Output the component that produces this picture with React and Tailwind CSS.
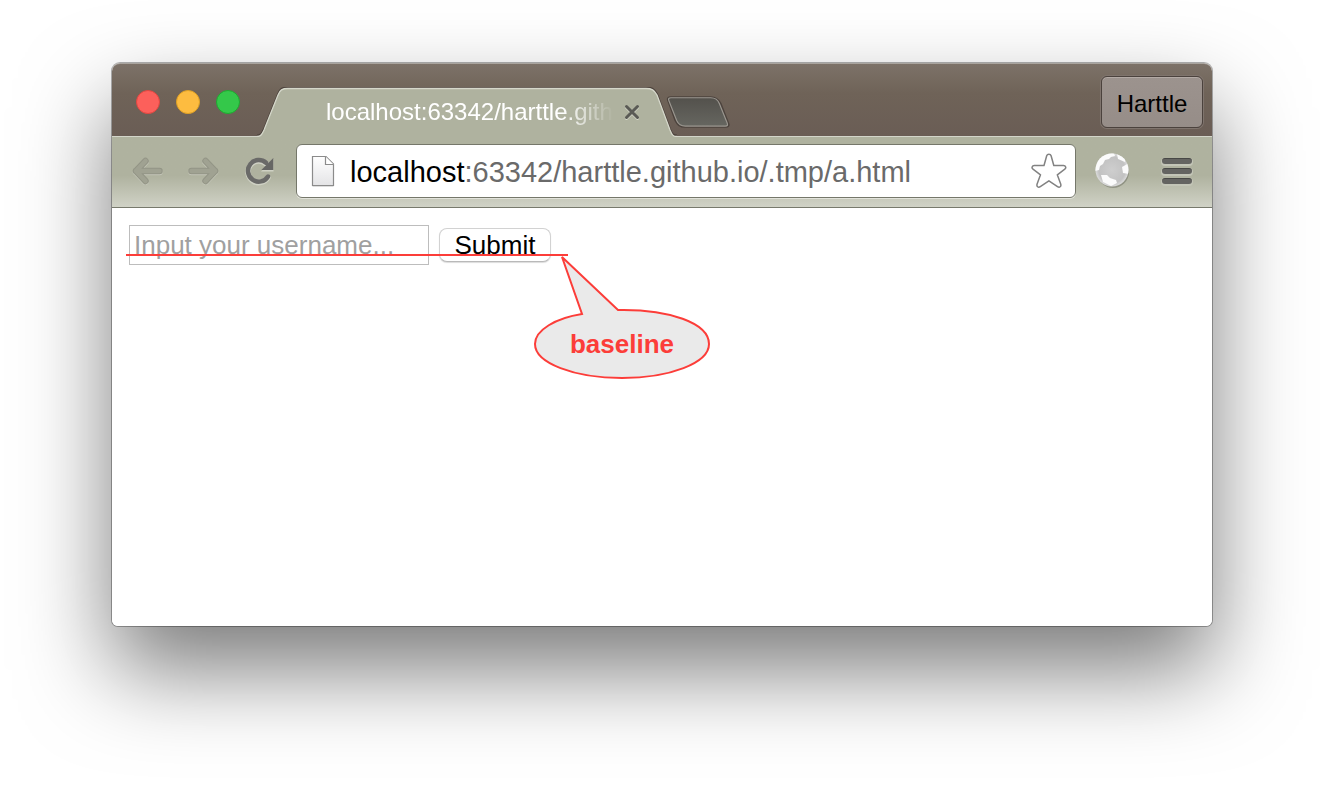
function TrafficLights() {
  return (
    <div className="mt-[26px] flex gap-4">
      <button type="button" aria-label="Close window" className="size-6 rounded-full border border-[#e2463f] bg-[#fc605b]" />
      <button type="button" aria-label="Minimize window" className="size-6 rounded-full border border-[#dfa023] bg-[#fdbc40]" />
      <button type="button" aria-label="Zoom window" className="size-6 rounded-full border border-[#1dab2f] bg-[#34c84a]" />
    </div>
  );
}

function Tab() {
  return (
    <div className="relative z-10 ml-[17px] mt-[23px] flex h-[49px] w-[420px] items-center pl-[69px]">
      <svg className="absolute left-0 top-0 h-[50px] w-[420px]" viewBox="0 0 420 50" fill="none" aria-hidden="true">
        <path
          d="M0 48.5C4 48.5 5 46 7 42L21 7C23 2 25 .5 31 .5H389C395 .5 397 2 400 7L413 42C415 47 416 48.5 420 48.5"
          stroke="#4c423c"
          strokeWidth="2"
        />
        <path
          d="M0 50V49.5C4 49.5 5 47 7 43L21 8C23 3 25 1.5 31 1.5H389C395 1.5 397 3 400 8L413 43C415 48 416 49.5 420 49.5V50Z"
          fill="#afb29f"
        />
        <path
          d="M0 49.5C4 49.5 5 47 7 43L21 8C23 3 25 1.5 31 1.5H389C395 1.5 397 3 400 8L413 43C415 48 416 49.5 420 49.5"
          stroke="#d6d8cb"
          strokeWidth="1.3"
        />
      </svg>
      <span className="relative w-72 whitespace-nowrap text-2xl text-white [mask-image:linear-gradient(to_right,black_82%,transparent_100%)]">
        localhost:63342/harttle.gith
      </span>
      <button type="button" aria-label="Close tab" className="relative ml-[10px] flex size-4">
        <svg className="size-4" viewBox="0 0 16 16" aria-hidden="true">
          <path d="M2.5 3.500l11 11M13.5 3.500l-11 11" stroke="#d3d5c8" strokeWidth="3" strokeLinecap="round" />
          <path d="M2.5 2.500l11 11M13.5 2.500l-11 11" stroke="#5a5a55" strokeWidth="3" strokeLinecap="round" />
        </svg>
      </button>
    </div>
  );
}

function NewTabButton() {
  return (
    <button type="button" aria-label="New tab" className="-ml-[11px] mt-8 flex h-8 w-16">
      <svg className="h-8 w-16" viewBox="0 0 66 34" preserveAspectRatio="none" aria-hidden="true">
        <defs>
          <linearGradient id="newTabFill" x1="0" y1="0" x2="0" y2="1">
            <stop offset="0" stopColor="#53514c" />
            <stop offset="1" stopColor="#666660" />
          </linearGradient>
        </defs>
        <path d="M5 1.500H46C51 1.500 54 4 56 8L64 29C65 31.500 64 32.500 61.500 32.500H20C14 32.500 12 30 10 26L2.500 5C1.500 2.500 2.500 1.500 5 1.500Z" fill="none" stroke="#4c433d" strokeWidth="2.500" />
        <path d="M5 1.800H46C51 1.800 53.500 4 55 8L63 28.500C64 31 63.500 32 61 32H20C15 32 12.500 29.500 11 26L3 5C2 2.800 3 1.800 5 1.800Z" fill="url(#newTabFill)" stroke="#9b9790" strokeWidth="1.200" />
      </svg>
    </button>
  );
}

function TitleBar() {
  return (
    <div className="-mt-px box-content flex h-[72px] items-start rounded-t-lg border-t border-[#a9a49e] bg-linear-to-b from-[#7d7268] via-[#6f6358] via-40% to-[#6a5d55] pl-6 pr-[9px]">
      <TrafficLights />
      <Tab />
      <NewTabButton />
      <button
        type="button"
        className="ml-auto mt-3 h-[52px] w-[102px] rounded-md border border-[#4b423d] bg-linear-to-b from-[#9c938e] to-[#968d88] pt-1 text-2xl text-black shadow-[inset_0_1px_0_#b3aaa5,0_0_0_1px_#7f746d]"
      >
        Harttle
      </button>
    </div>
  );
}

const BACK_PATH = "M4 14H27.500M4 14L13.500 4M4 14L13.500 24";

function ArrowIcon({ flipped }) {
  return (
    <svg className="h-7 w-8" viewBox="0 0 32 28" fill="none" strokeLinecap="round" strokeLinejoin="round" aria-hidden="true">
      <g transform={flipped ? "translate(32 0) scale(-1 1)" : undefined}>
        <path d={BACK_PATH} transform="translate(0 1)" stroke="#c4c6b8" strokeWidth="6.500" />
        <path d={BACK_PATH} stroke="#939586" strokeWidth="6.500" />
        <path d={BACK_PATH} stroke="#a0a292" strokeWidth="4.500" />
      </g>
    </svg>
  );
}

function ReloadIcon() {
  return (
    <svg className="h-8 w-[30px]" viewBox="0 0 30 32" fill="none" aria-hidden="true">
      <g transform="translate(0 1)" stroke="#cfd1c4" strokeWidth="5.500" strokeLinecap="round">
        <path d="M23 21.500A10.800 10.800 0 1 1 21 7.800" />
      </g>
      <path d="M28.500 3V15.500H16Z" fill="#cfd1c4" transform="translate(0 1)" />
      <path d="M23 21.500A10.800 10.800 0 1 1 21 7.800" stroke="#6a6a68" strokeWidth="4.500" strokeLinecap="round" />
      <path d="M28.300 3V15H16.300Z" fill="#666664" />
    </svg>
  );
}

function PageIcon() {
  return (
    <svg className="h-8 w-6 shrink-0" viewBox="0 0 24 32" aria-hidden="true">
      <defs>
        <linearGradient id="pageFill" x1="0" y1="0" x2="0" y2="1">
          <stop offset="0" stopColor="#fff" />
          <stop offset="1" stopColor="#e4e4e6" />
        </linearGradient>
      </defs>
      <path d="M1.500 31.500H22.500" stroke="#ddd" strokeWidth="1.500" />
      <path d="M1.500 1.500H15L22.500 9V30.500H1.500Z" fill="url(#pageFill)" stroke="#8b8b8b" strokeWidth="1.200" />
      <path d="M14.500 1.500V9.500H22.500" fill="#fff" stroke="#8b8b8b" strokeWidth="1.200" />
    </svg>
  );
}

function StarIcon() {
  return (
    <svg className="size-9" viewBox="0 0 36 36" fill="#fff" stroke="#828282" strokeWidth="1.500" strokeLinejoin="round" aria-hidden="true">
      <path d="M15.700 2.800C16.300.8 19.500.8 20.100 2.800L22.800 12.500H32.500C34.800 12.500 35.500 15 33.800 16.200L26.300 21.800L29.700 31C30.500 33.500 28.500 35 26.500 33.600L17.900 27.800L9.300 33.600C7.300 35 5.300 33.500 6.100 31L9.500 21.800L2 16.200C.3 15 1 12.500 3.300 12.500H13Z" />
    </svg>
  );
}

function GlobeIcon() {
  return (
    <svg className="size-[38px]" viewBox="0 0 38 38" aria-hidden="true">
      <defs>
        <radialGradient id="globeFill" cx=".5" cy=".5" r=".5">
          <stop offset="0" stopColor="#cecece" />
          <stop offset=".8" stopColor="#c2c2c2" />
          <stop offset="1" stopColor="#dcdcdc" />
        </radialGradient>
        <filter id="globeSoft" x="-20%" y="-20%" width="140%" height="140%">
          <feGaussianBlur stdDeviation=".7" />
        </filter>
        <clipPath id="globeClip">
          <circle cx="18" cy="18" r="16.500" />
        </clipPath>
      </defs>
      <circle cx="19" cy="20" r="16" fill="#777a6c" opacity=".6" filter="url(#globeSoft)" />
      <circle cx="18" cy="18" r="16.500" fill="url(#globeFill)" />
      <g clipPath="url(#globeClip)" fill="#fbfbfb" filter="url(#globeSoft)">
        <path d="M1 19V8L9 1H20L21 4L17 5L15 7L11 8L9 12L6 14L5 18Z" />
        <path d="M23 2L31 6L31 10L24 7Z" />
        <path d="M28 15L35 11V22L29 21Z" />
        <path d="M7 23H13L16 26L22 28L23 31L17 34L9 30Z" />
      </g>
    </svg>
  );
}

function Toolbar() {
  return (
    <div className="flex h-[72px] items-center border-b border-t border-b-[#77796c] border-t-[#d3d5ca] bg-linear-to-b from-[#afb29f] via-[#afb29f] via-55% to-[#d0d2c6] px-5 pb-0.5">
      <button type="button" aria-label="Back" className="flex">
        <ArrowIcon />
      </button>
      <button type="button" aria-label="Forward" className="ml-[23px] flex">
        <ArrowIcon flipped />
      </button>
      <button type="button" aria-label="Reload" className="ml-[26px] flex">
        <ReloadIcon />
      </button>
      <div className="ml-[21px] flex h-[54px] min-w-0 flex-1 items-center rounded-md border border-[#75776a] bg-white pl-[14px] pr-2 shadow-[0_1px_0_#e2e3db]">
        <PageIcon />
        <a href="#address" className="ml-[15px] min-w-0 flex-1 overflow-hidden whitespace-nowrap pt-0.5 text-[29px] leading-9 text-[#6a6a6a]">
          <span className="text-black">localhost</span>:63342/harttle.github.io/.tmp/a.html
        </a>
        <button type="button" aria-label="Bookmark this page" className="flex">
          <StarIcon />
        </button>
      </div>
      <button type="button" aria-label="Extension" className="ml-[18px] flex">
        <GlobeIcon />
      </button>
      <button type="button" aria-label="Menu" className="ml-[30px] flex w-[30px] flex-col gap-1">
        <span className="h-1.5 w-full rounded-full border-t border-[#484846] bg-[#646461] shadow-[0_1px_0_1px_#c3c5b7]" />
        <span className="h-1.5 w-full rounded-full border-t border-[#484846] bg-[#646461] shadow-[0_1px_0_1px_#c3c5b7]" />
        <span className="h-1.5 w-full rounded-full border-t border-[#484846] bg-[#646461] shadow-[0_1px_0_1px_#c3c5b7]" />
      </button>
    </div>
  );
}

function BaselineCallout() {
  return (
    <div className="pointer-events-none absolute left-[14px] top-[46px] h-[126px] w-[586px]">
      <svg className="absolute inset-0 h-full w-full" viewBox="0 0 586 126" fill="none" stroke="#fc3d39" strokeWidth="2" aria-hidden="true">
        <path d="M0 1H442" />
        <path d="M436 3L492 56C543 55 583 69 583 90C583 109 544 124 496 124C448 124 409 109 409 90C409 76 430 64 456 60Z" fill="#eaeaea" />
      </svg>
      <span className="absolute left-[409px] top-[72px] w-[174px] text-center text-[26px] font-bold leading-9 text-[#fc3d39]">
        baseline
      </span>
    </div>
  );
}

function PageContent() {
  return (
    <main className="relative min-h-[418px] rounded-b-md bg-white p-[17px]">
      <form className="flex items-center gap-[10px]" onSubmit={(event) => event.preventDefault()}>
        <input
          type="text"
          aria-label="Username"
          placeholder="Input your username..."
          className="h-10 w-[300px] border border-[#bdbdbd] bg-white px-1 text-[26px] text-black placeholder:text-[#a0a0a0] placeholder:opacity-100"
        />
        <button
          type="submit"
          className="flex h-[34px] w-28 items-center justify-center rounded-lg border border-[#d2d2d2] border-b-[#b9b9b9] bg-white text-[26px] leading-8 text-black shadow-[0_1px_1px_#dcdcdc]"
        >
          Submit
        </button>
      </form>
      <BaselineCallout />
    </main>
  );
}

export default function App() {
  return (
    <div className="min-h-screen overflow-hidden bg-white px-28 pb-40 pt-16 font-['Liberation_Sans',Arial,sans-serif]">
      <div className="rounded-b-md rounded-t-lg shadow-[0_0_0_1px_rgba(0,0,0,0.3),0_44px_90px_rgba(0,0,0,0.52)]">
        <TitleBar />
        <Toolbar />
        <PageContent />
      </div>
    </div>
  );
}
